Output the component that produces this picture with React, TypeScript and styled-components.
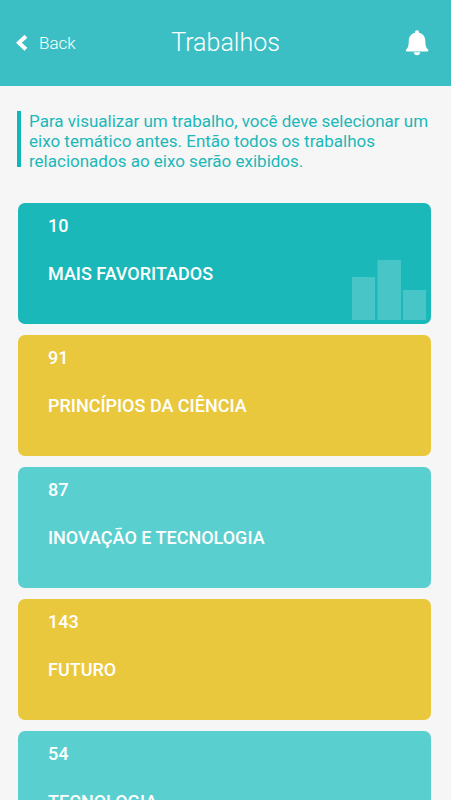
import React from 'react';
import styled, { createGlobalStyle } from 'styled-components';

const GlobalStyle = createGlobalStyle`
  *, *::before, *::after {
    box-sizing: border-box;
  }
  html {
    scrollbar-width: none;
  }
  body {
    margin: 0;
    background: #f6f6f6;
    font-family: Roboto, 'Liberation Sans', sans-serif;
  }
`;

const Header = styled.header`
  display: grid;
  grid-template-columns: 1fr auto 1fr;
  align-items: center;
  height: 86px;
  padding: 0 22px 0 16px;
  background: #3cbfc4;
  color: #ffffff;
`;

const BackButton = styled.button`
  display: flex;
  align-items: center;
  justify-self: start;
  gap: 11px;
  padding: 0;
  border: 0;
  background: none;
  color: inherit;
  font: 300 17px/20px Roboto, 'Liberation Sans', sans-serif;
  cursor: pointer;
`;

const PageTitle = styled.h1`
  margin: 0;
  padding-left: 6px;
  font-size: 25px;
  font-weight: 300;
  line-height: 32px;
`;

const IconButton = styled.button`
  display: flex;
  justify-self: end;
  padding: 0;
  border: 0;
  background: none;
  color: inherit;
  cursor: pointer;
`;

const Content = styled.main`
  padding: 25px 0 20px;
`;

const Notice = styled.p`
  margin: 0 17px 32px;
  padding-left: 12px;
  background: linear-gradient(#0fb8b8, #0fb8b8) no-repeat left top / 4px calc(100% - 4px);
  color: #1cb8b9;
  font-size: 17px;
  line-height: 20px;
`;

const CardList = styled.ul`
  display: flex;
  flex-direction: column;
  gap: 11px;
  margin: 0 20px 0 18px;
  padding: 0;
  list-style: none;
`;

const tones = {
  featured: '#1bb8b9',
  yellow: '#eac83e',
  aqua: '#5acfd0',
};

type Tone = keyof typeof tones;

const Card = styled.a<{ $tone: Tone }>`
  display: flex;
  justify-content: space-between;
  min-height: 121px;
  padding: 13px 4px 4px 30px;
  border-radius: 7px;
  background: ${({ $tone }) => tones[$tone]};
  color: #ffffff;
  font-size: 18px;
  font-weight: 500;
  line-height: 20px;
  text-decoration: none;
`;

const CardText = styled.span`
  display: flex;
  flex-direction: column;
  gap: 28px;
`;

const ChartArt = styled.svg`
  flex: none;
  align-self: flex-end;
`;

const axes: { count: number; name: string; tone: Tone }[] = [
  { count: 10, name: 'MAIS FAVORITADOS', tone: 'featured' },
  { count: 91, name: 'PRINCÍPIOS DA CIÊNCIA', tone: 'yellow' },
  { count: 87, name: 'INOVAÇÃO E TECNOLOGIA', tone: 'aqua' },
  { count: 143, name: 'FUTURO', tone: 'yellow' },
  { count: 54, name: 'TECNOLOGIA', tone: 'aqua' },
];

const BackIcon = () => (
  <svg width="12" height="18" viewBox="0 0 12 18" aria-hidden="true">
    <path d="M9.900 2.300 2.900 8.800l7 6.500" fill="none" stroke="currentColor" strokeWidth="4" />
  </svg>
);

const BellIcon = () => (
  <svg width="24" height="26" viewBox="0 0 24 26" fill="currentColor" aria-hidden="true">
    <path d="M12 0.3c1.2 0 2 .8 2 2v.5c3.8.9 6.2 3.8 6.300 7.700.1 4.700.5 7 2.500 8.700.6.500.5.900.5 1.300 0 .6-.4.900-1 .900H1.900c-.6 0-1-.3-1-.900 0-.4 0-.8.5-1.300 2-1.700 2.300-4 2.400-8.700.1-3.900 2.500-6.800 6.200-7.700v-.5c0-1.200.8-2 2-2z" />
    <path d="M8.700 22.300h6.600c-.3 1.900-1.500 3-3.300 3s-3-1.100-3.300-3z" />
  </svg>
);

const Chart = () => (
  <ChartArt width="76" height="61" viewBox="0 0 76 61" fill="#ffffff" fillOpacity="0.2" aria-hidden="true">
    <path d="M1 18h23v43H1zM26.500 1h23.500v60H26.500zM52 31h23v30H52z" />
  </ChartArt>
);

export default function App() {
  return (
    <>
      <GlobalStyle />
      <Header>
        <BackButton type="button">
          <BackIcon />
          Back
        </BackButton>
        <PageTitle>Trabalhos</PageTitle>
        <IconButton type="button" aria-label="Notificações">
          <BellIcon />
        </IconButton>
      </Header>
      <Content>
        <Notice>
          Para visualizar um trabalho, você deve selecionar um eixo temático antes. Então todos os
          trabalhos relacionados ao eixo serão exibidos.
        </Notice>
        <CardList>
          {axes.map(({ count, name, tone }) => (
            <li key={name}>
              <Card href="#" $tone={tone}>
                <CardText>
                  <span>{count}</span>
                  <span>{name}</span>
                </CardText>
                {tone === 'featured' && <Chart />}
              </Card>
            </li>
          ))}
        </CardList>
      </Content>
    </>
  );
}
